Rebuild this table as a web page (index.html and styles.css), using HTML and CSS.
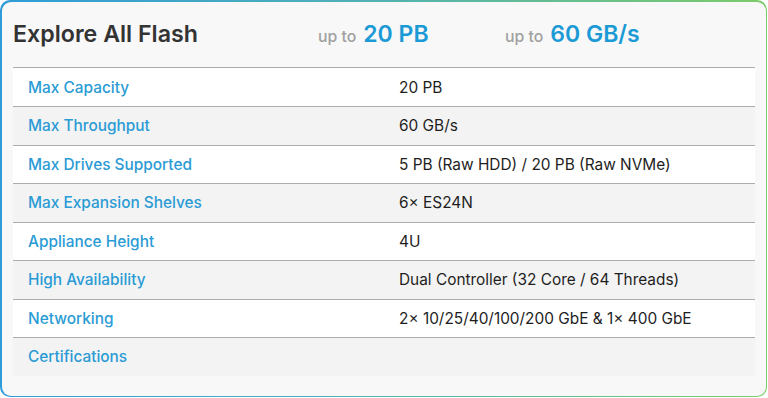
FILE: index.html
```html
<!DOCTYPE html>
<html>
<head>
<meta charset="utf-8">
<link rel="stylesheet" href="styles.css">
</head>
<body>
<div class="frame">
  <div class="card">
    <div class="header">
      <h1 class="title">Explore All Flash</h1>
      <div class="stat"><span class="stat-pre">up to</span><span class="stat-val">20 PB</span></div>
      <div class="stat"><span class="stat-pre">up to</span><span class="stat-val">60 GB/s</span></div>
    </div>
    <div class="specs">
      <div class="row"><div class="label">Max Capacity</div><div class="value">20 PB</div></div>
      <div class="row alt"><div class="label">Max Throughput</div><div class="value">60 GB/s</div></div>
      <div class="row"><div class="label">Max Drives Supported</div><div class="value">5 PB (Raw HDD) / 20 PB (Raw NVMe)</div></div>
      <div class="row alt"><div class="label">Max Expansion Shelves</div><div class="value">6× ES24N</div></div>
      <div class="row"><div class="label">Appliance Height</div><div class="value">4U</div></div>
      <div class="row alt"><div class="label">High Availability</div><div class="value">Dual Controller (32 Core / 64 Threads)</div></div>
      <div class="row"><div class="label">Networking</div><div class="value">2× 10/25/40/100/200 GbE &amp; 1× 400 GbE</div></div>
      <div class="row alt"><div class="label">Certifications</div><div class="value"></div></div>
    </div>
  </div>
</div>
</body>
</html>
```
FILE: styles.css
```css
html, body {
  margin: 0;
  padding: 0;
  background: #ffffff;
}
body {
  font-family: Inter, "Noto Sans", sans-serif;
}
.frame {
  width: 767px;
  height: 397px;
  box-sizing: border-box;
  padding: 1.5px;
  border-radius: 10px;
  background: linear-gradient(to right, #2e9cd8 0%, #4fb0b8 45%, #7ccb6a 100%);
}
.card {
  height: 100%;
  box-sizing: border-box;
  border-radius: 9px;
  background: #f8f8f8;
  padding: 0 10px 0 11.5px;
}
.header {
  display: grid;
  grid-template-columns: 305px 187px auto;
  align-items: baseline;
  height: 65.5px;
  box-sizing: border-box;
  padding-top: 18px;
}
.title {
  margin: 0;
  font-size: 23.2px;
  line-height: 28px;
  font-weight: 600;
  color: #333333;
}
.stat {
  display: flex;
  align-items: baseline;
  gap: 7px;
}
.stat-pre {
  font-size: 15.8px;
  font-weight: 500;
  color: #a0a0a0;
}
.stat-val {
  font-size: 23px;
  font-weight: 600;
  color: #1b9ad6;
}
.specs {
  width: 742px;
}
.row {
  display: grid;
  grid-template-columns: 371px 371px;
  height: 38.5px;
  box-sizing: border-box;
  border-top: 1px solid #acacac;
  background: #ffffff;
  align-items: center;
}
.row:first-child {
  height: 39px;
}
.row.alt {
  background: #f3f3f3;
}
.label {
  padding-left: 15px;
  font-size: 15.4px;
  font-weight: 500;
  color: #2a9bd5;
}
.value {
  padding-left: 15px;
  font-size: 15.4px;
  font-weight: 400;
  color: #1e1e1e;
}
```
